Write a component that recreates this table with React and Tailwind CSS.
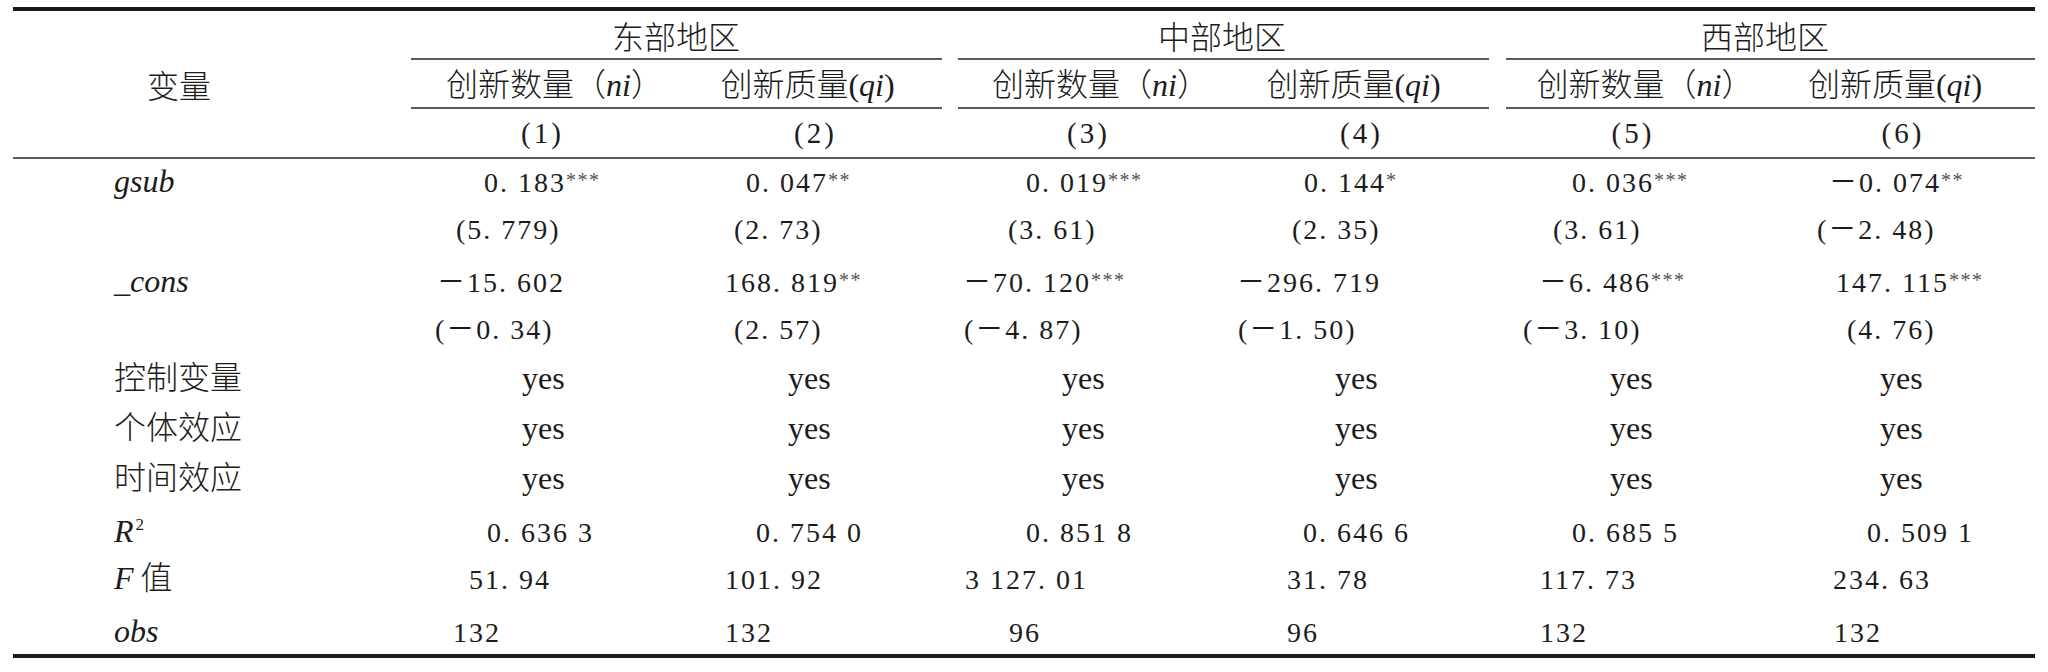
import React from 'react';

// Regression table: three regions x (count, quality), typeset like a journal page.
const CJK = "font-['Noto_Sans_CJK_SC',sans-serif] text-[32px] font-light";
const LAT = "font-['Liberation_Serif',serif] text-[32px]";
const NUM = "font-['Liberation_Serif','Noto_Sans_CJK_SC',serif] text-[28px] tracking-[2px]";

const COLS = ['w-[273px]', 'w-[273px]', 'w-[273px]', 'w-[273px]', 'w-[270px]', 'w-[270px]'];

const GROUPS = [
  { name: '东部地区', w: 'w-[546px]', line: 'ml-[8px] mr-[7px]', cols: [0, 1] },
  { name: '中部地区', w: 'w-[546px]', line: 'ml-[9px] mr-[6px]', cols: [2, 3] },
  { name: '西部地区', w: 'w-[540px]', line: 'ml-[11px] mr-0', cols: [4, 5] },
];

// each cell: [text, stars, padding class]
const ROWS = [
  {
    label: <i className={LAT}>gsub</i>,
    pt: 'pt-[5px]',
    cells: [
      ['0. 183', '***', 'pl-[81px]'],
      ['0. 047', '**', 'pl-[70px]'],
      ['0. 019', '***', 'pl-[77px]'],
      ['0. 144', '*', 'pl-[82px]'],
      ['0. 036', '***', 'pl-[77px]'],
      ['－0. 074', '**', 'pl-[64px]'],
    ],
  },
  {
    label: null,
    pt: 'pt-[6.5px]',
    cells: [
      ['(5. 779)', '', 'pl-[53px]'],
      ['(2. 73)', '', 'pl-[58px]'],
      ['(3. 61)', '', 'pl-[59px]'],
      ['(2. 35)', '', 'pl-[70px]'],
      ['(3. 61)', '', 'pl-[58px]'],
      ['(－2. 48)', '', 'pl-[52px]'],
    ],
  },
  {
    label: <i className={LAT}>_cons</i>,
    pt: 'pt-[5px]',
    cells: [
      ['－15. 602', '', 'pl-[34px]'],
      ['168. 819', '**', 'pl-[49px]'],
      ['－70. 120', '***', 'pl-[14px]'],
      ['－296. 719', '', 'pl-[15px]'],
      ['－6. 486', '***', 'pl-[44px]'],
      ['147. 115', '***', 'pl-[71px]'],
    ],
  },
  {
    label: null,
    pt: 'pt-[6.5px]',
    cells: [
      ['(－0. 34)', '', 'pl-[32px]'],
      ['(2. 57)', '', 'pl-[58px]'],
      ['(－4. 87)', '', 'pl-[15px]'],
      ['(－1. 50)', '', 'pl-[16px]'],
      ['(－3. 10)', '', 'pl-[28px]'],
      ['(4. 76)', '', 'pl-[82px]'],
    ],
  },
  { label: '控制变量', pt: 'pt-[2px]', yes: true },
  { label: '个体效应', pt: 'pt-[2px]', yes: true },
  { label: '时间效应', pt: 'pt-[2px]', yes: true },
  {
    label: (
      <span className={LAT}>
        <i>R</i>
        <span className="text-[17px] align-[12px] leading-[0] ml-[2px]">2</span>
      </span>
    ),
    pt: 'pt-[5px]',
    cells: [
      ['0. 636 3', '', 'pl-[84px]'],
      ['0. 754 0', '', 'pl-[80px]'],
      ['0. 851 8', '', 'pl-[77px]'],
      ['0. 646 6', '', 'pl-[81px]'],
      ['0. 685 5', '', 'pl-[77px]'],
      ['0. 509 1', '', 'pl-[102px]'],
    ],
  },
  {
    label: (
      <span className={CJK}>
        <i className={LAT}>F</i> 值
      </span>
    ),
    pt: 'pt-[2px]',
    cells: [
      ['51. 94', '', 'pl-[66px]'],
      ['101. 92', '', 'pl-[49px]'],
      ['3 127. 01', '', 'pl-[16px]'],
      ['31. 78', '', 'pl-[65px]'],
      ['117. 73', '', 'pl-[45px]'],
      ['234. 63', '', 'pl-[68px]'],
    ],
  },
  {
    label: <i className={LAT}>obs</i>,
    pt: 'pt-[5px]',
    last: true,
    cells: [
      ['132', '', 'pl-[50px]'],
      ['132', '', 'pl-[49px]'],
      ['96', '', 'pl-[60px]'],
      ['96', '', 'pl-[65px]'],
      ['132', '', 'pl-[45px]'],
      ['132', '', 'pl-[69px]'],
    ],
  },
];

const YES_PAD = ['pl-[119px]', 'pl-[112px]', 'pl-[113px]', 'pl-[113px]', 'pl-[115px]', 'pl-[115px]'];

function Stars({ n }) {
  if (!n) return null;
  return (
    <span className="font-['Liberation_Serif',serif] text-[20px] tracking-[1.5px] align-[5px] leading-[0] text-[#555]">
      {n}
    </span>
  );
}

function BodyRow({ row }) {
  const h = row.last ? 'h-[45px]' : 'h-[50px]';
  return (
    <div className={`flex items-baseline ${h} ${row.pt}`}>
      <div className={`w-[390px] pl-[101px] leading-[28px] ${CJK}`}>{row.label}</div>
      {row.yes
        ? COLS.map((w, i) => (
            <div key={i} className={`${w} ${YES_PAD[i]} leading-[28px] ${LAT}`}>
              yes
            </div>
          ))
        : row.cells.map(([text, stars, pad], i) => (
            <div key={i} className={`${COLS[i]} ${pad} leading-[28px] whitespace-pre ${NUM}`}>
              {text}
              <Stars n={stars} />
            </div>
          ))}
    </div>
  );
}

function SubHead({ kind }) {
  if (kind === 'n') {
    return (
      <span className={`${CJK} pl-[30px]`}>
        创新数量（<i className={LAT}>ni</i>）
      </span>
    );
  }
  return (
    <span className={`${CJK} pr-[10px]`}>
      创新质量<span className={LAT}>(</span>
      <i className={LAT}>qi</i>
      <span className={LAT}>)</span>
    </span>
  );
}

export default function App() {
  return (
    <div className="min-h-screen w-[2048px] bg-white text-[#1c1c1c] pt-[7px] pl-[13px]">
      <div className="w-[2022px] border-t-[4px] border-b-[4px] border-[#1a1a1a]">
        <div className="flex h-[146px]">
          <div className={`w-[390px] flex items-center pl-[134px] ${CJK}`}>变量</div>
          {GROUPS.map((g) => (
            <div key={g.name} className={`${g.w} flex flex-col`}>
              <div className={`h-[47px] flex items-center justify-center leading-none ${CJK}`}>
                {g.name}
              </div>
              <div className={`h-[2px] bg-[#5c5c5c] ${g.line}`} />
              <div className="flex h-[47px]">
                {g.cols.map((c, i) => (
                  <div key={c} className={`${COLS[c]} flex items-center justify-center leading-none`}>
                    <SubHead kind={i === 0 ? 'n' : 'q'} />
                  </div>
                ))}
              </div>
              <div className={`h-[2px] bg-[#5c5c5c] ${g.line}`} />
              <div className="flex h-[48px]">
                {g.cols.map((c) => (
                  <div
                    key={c}
                    className={`${COLS[c]} flex items-center justify-center leading-none pl-[6px] font-['Liberation_Serif',serif] text-[29px] tracking-[3px]`}
                  >
                    ({c + 1})
                  </div>
                ))}
              </div>
            </div>
          ))}
        </div>
        <div className="h-[2px] bg-[#5c5c5c]" />
        {ROWS.map((row, i) => (
          <BodyRow key={i} row={row} />
        ))}
      </div>
    </div>
  );
}
